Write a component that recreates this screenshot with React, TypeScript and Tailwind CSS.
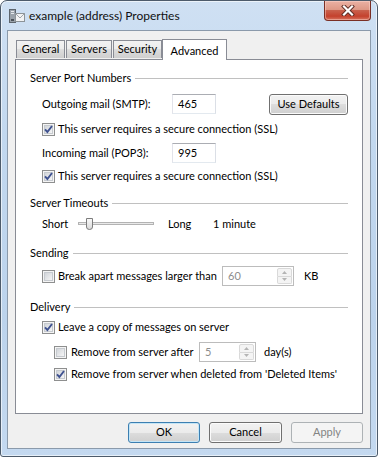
import React from "react";

function Check({ checked }: { checked?: boolean }) {
  return (
    <svg width="13" height="13" viewBox="0 0 13 13" className="shrink-0">
      <defs>
        <linearGradient id="cbfill" x1="0" y1="0" x2="1" y2="1">
          <stop offset="0" stopColor="#cfd3d8" />
          <stop offset="1" stopColor="#f7f7f7" />
        </linearGradient>
      </defs>
      <rect x="0.5" y="0.5" width="12" height="12" fill="#f4f4f4" stroke="#8e8f8f" />
      <rect x="2.5" y="2.5" width="8" height="8" fill="url(#cbfill)" stroke="#c6cacf" />
      {checked && (
        <path d="M3 6.3 L5.4 9 L10 3" fill="none" stroke="#3f5290" strokeWidth="1.9" />
      )}
    </svg>
  );
}

function CheckRow({
  checked,
  label,
  className,
  gap = "ml-[3px]",
}: {
  checked?: boolean;
  label: string;
  className?: string;
  gap?: string;
}) {
  return (
    <div className={`flex h-[18px] items-center ${className ?? ""}`}>
      <Check checked={checked} />
      <span className={gap}>{label}</span>
    </div>
  );
}

function Section({ title, className }: { title: string; className?: string }) {
  return (
    <div className={`flex h-[18px] items-center gap-[4px] ${className ?? ""}`}>
      <span>{title}</span>
      <div className="h-px flex-1 bg-[#c0c0c0]" />
    </div>
  );
}

function TextBox({ value }: { value: string }) {
  return (
    <div className="flex h-[20px] w-[44px] items-center border border-[#abadb3] border-r-[#dbdfe6] border-b-[#e3e9ef] border-l-[#e2e3ea] bg-white pl-[5px]">
      {value}
    </div>
  );
}

function Spin({ value, width }: { value: string; width: string }) {
  return (
    <div
      className={`flex h-[20px] ${width} items-center justify-between border border-[#bcbcbc] bg-white pl-[5px] pr-[1px] text-[#8d8d8d]`}
    >
      <span>{value}</span>
      <div className="flex h-[16px] w-[15px] flex-col">
        <div className="flex flex-1 items-center justify-center rounded-t-[2px] border border-[#d9d9d9] bg-[#f4f4f4]">
          <svg width="5" height="3" viewBox="0 0 5 3">
            <path d="M0 3 L2.5 0 L5 3 Z" fill="#b4b4b4" />
          </svg>
        </div>
        <div className="flex flex-1 items-center justify-center rounded-b-[2px] border border-t-0 border-[#d9d9d9] bg-[#f4f4f4]">
          <svg width="5" height="3" viewBox="0 0 5 3">
            <path d="M0 0 L2.5 3 L5 0 Z" fill="#b4b4b4" />
          </svg>
        </div>
      </div>
    </div>
  );
}

function Btn({
  children,
  width,
  focus,
  disabled,
}: {
  children: React.ReactNode;
  width: string;
  focus?: boolean;
  disabled?: boolean;
}) {
  if (disabled) {
    return (
      <div
        className={`flex h-[21px] ${width} items-center justify-center rounded-[3px] border border-[#adb2b5] bg-[#f4f4f4] text-[#838383]`}
      >
        {children}
      </div>
    );
  }
  return (
    <div
      className={`flex h-[21px] ${width} items-center justify-center rounded-[3px] border ${
        focus
          ? "border-[#3c7fb1] shadow-[inset_0_0_0_1px_#c4e5f6]"
          : "border-[#707070] shadow-[inset_0_0_0_1px_#fbfbfb]"
      } bg-[linear-gradient(#f2f2f2_0%,#ebebeb_50%,#dddddd_50%,#cfcfcf_100%)]`}
    >
      {children}
    </div>
  );
}

function Slider() {
  return (
    <svg width="76" height="22" viewBox="0 0 76 22" className="shrink-0">
      <rect x="0.5" y="9.5" width="75" height="2" fill="#e9e9e9" stroke="#b3b3b3" />
      <defs>
        <linearGradient id="thumb" x1="0" y1="0" x2="0" y2="1">
          <stop offset="0" stopColor="#fafafa" />
          <stop offset="1" stopColor="#d8d8d8" />
        </linearGradient>
      </defs>
      <path
        d="M8.5 5.5 H14.5 V14 Q14.5 16.5 11.5 16.5 Q8.5 16.5 8.5 14 Z"
        fill="url(#thumb)"
        stroke="#7c7c7c"
      />
    </svg>
  );
}

function WindowIcon() {
  return (
    <svg width="16" height="16" viewBox="0 0 16 16" className="shrink-0">
      <rect x="0.5" y="1.5" width="6" height="13" fill="#9aa2aa" stroke="#5d656d" />
      <rect x="2" y="3" width="3" height="1" fill="#e6e9ec" />
      <rect x="2" y="5" width="3" height="1" fill="#e6e9ec" />
      <rect x="2" y="11" width="3" height="2" fill="#4a5158" />
      <rect x="6.5" y="5.5" width="9" height="8" fill="#f2f3f4" stroke="#8c9398" />
      <path d="M6.5 5.5 L11 10 L15.5 5.5" fill="none" stroke="#a1a7ac" />
    </svg>
  );
}

const tabBg =
  "bg-[linear-gradient(#f2f2f2_0%,#ebebeb_50%,#dddddd_50%,#cfcfcf_100%)]";

export default function App() {
  return (
    <div className="h-[457px] w-[378px] whitespace-nowrap bg-white font-['Lato',sans-serif] text-[11px] text-black">
      <div className="flex h-full flex-col rounded-t-[7px] rounded-b-[3px] border border-[#4d5b6b] bg-[linear-gradient(#cfe0f3_0%,#c2d8ef_30%,#bcd3ec_70%,#c4d9f0_100%)] shadow-[inset_0_0_0_1px_rgba(255,255,255,0.6)]">
        <div className="flex h-[29px] shrink-0 pl-[8px]">
          <div className="flex flex-1 items-center gap-[4px]">
            <WindowIcon />
            <span className="text-[12px] text-[#111]">example (address) Properties</span>
          </div>
          <div className="mr-[6px] flex h-[20px] w-[47px] items-center justify-center rounded-b-[4px] border border-t-0 border-[#7a2f25] bg-[linear-gradient(#eab1a4_0%,#de9886_45%,#c9604c_50%,#c4412d_80%,#d7735f_100%)] shadow-[inset_0_0_0_1px_rgba(255,220,210,0.45)]">
            <svg width="14" height="11" viewBox="0 0 14 11">
              <path d="M3 1.5 L11 9.5 M11 1.5 L3 9.5" stroke="#5b2a22" strokeWidth="4" strokeLinecap="square" />
              <path d="M3 1.5 L11 9.5 M11 1.5 L3 9.5" stroke="#ffffff" strokeWidth="2.2" strokeLinecap="square" />
            </svg>
          </div>
        </div>

        <div className="mx-[6px] mb-[7px] flex flex-1 flex-col border border-[#8b9aab] bg-[#f0f0f0]">
          <div className="ml-[8px] mt-[7px] flex h-[21px] items-end">
            <div className={`mb-[1px] flex h-[18px] w-[49px] items-center justify-center border border-b-0 border-[#898c95] ${tabBg}`}>
              General
            </div>
            <div className={`mb-[1px] ml-[1px] flex h-[18px] w-[46px] items-center justify-center border border-b-0 border-[#898c95] ${tabBg}`}>
              Servers
            </div>
            <div className={`mb-[1px] ml-[1px] flex h-[18px] w-[49px] items-center justify-center border border-b-0 border-[#898c95] ${tabBg}`}>
              Security
            </div>
            <div className="relative z-10 -mb-[1px] flex h-[21px] w-[65px] items-start justify-center border border-b-0 border-[#898c95] bg-white pt-[3px]">
              Advanced
            </div>
          </div>

          <div className="mx-[7px] h-[355px] border border-[#898c95] bg-white">
            <div className="flex flex-col px-[14px] pt-[9px]">
              <Section title="Server Port Numbers" />
              <div className="mt-[6px] flex h-[22px] items-center pl-[12px]">
                <span className="w-[130px]">Outgoing mail (SMTP):</span>
                <TextBox value="465" />
                <span className="flex-1" />
                <Btn width="w-[79px]">Use Defaults</Btn>
              </div>
              <CheckRow
                className="mt-[5px] pl-[12px]"
                checked
                label="This server requires a secure connection (SSL)"
              />
              <div className="mt-[5px] flex h-[20px] items-center pl-[12px]">
                <span className="w-[130px]">Incoming mail (POP3):</span>
                <TextBox value="995" />
              </div>
              <CheckRow
                className="mt-[4px] pl-[12px]"
                checked
                label="This server requires a secure connection (SSL)"
              />

              <Section className="mt-[9px]" title="Server Timeouts" />
              <div className="mt-[1px] flex h-[22px] items-center pl-[12px]">
                <span className="w-[36px]">Short</span>
                <Slider />
                <span className="ml-[14px] w-[45px]">Long</span>
                <span>1 minute</span>
              </div>

              <Section className="mt-[9px]" title="Sending" />
              <div className="mt-[3px] flex h-[22px] items-center pl-[12px]">
                <Check />
                <span className="ml-[3px] w-[164px]">Break apart messages larger than</span>
                <Spin value="60" width="w-[72px]" />
                <span className="ml-[10px]">KB</span>
              </div>

              <Section className="mt-[11px]" title="Delivery" />
              <CheckRow
                className="mt-[2px] pl-[12px]"
                checked
                label="Leave a copy of messages on server"
              />
              <div className="mt-[5px] flex h-[22px] items-center pl-[24px]">
                <Check />
                <span className="ml-[4px] w-[128px]">Remove from server after</span>
                <Spin value="5" width="w-[57px]" />
                <span className="ml-[8px]">day(s)</span>
              </div>
              <CheckRow
                className="mt-[2px] pl-[24px]"
                gap="ml-[4px]"
                checked
                label="Remove from server when deleted from 'Deleted Items'"
              />
            </div>
          </div>

          <div className="mr-[7px] mt-[8px] flex justify-end gap-[9px]">
            <Btn width="w-[72px]" focus>
              OK
            </Btn>
            <Btn width="w-[73px]">Cancel</Btn>
            <Btn width="w-[72px]" disabled>
              Apply
            </Btn>
          </div>
        </div>
      </div>
    </div>
  );
}
